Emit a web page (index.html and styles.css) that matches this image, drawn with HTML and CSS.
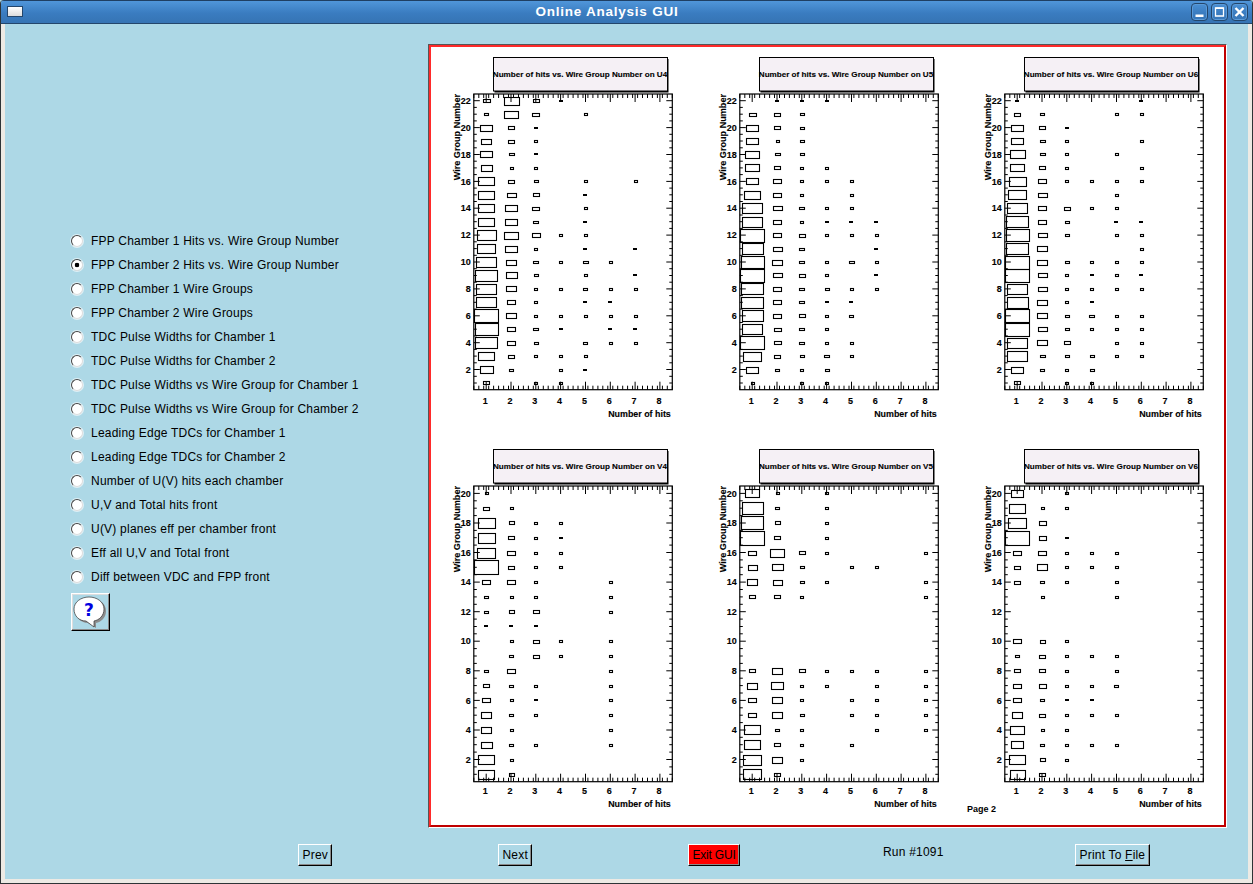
FILE: index.html
```html
<!DOCTYPE html>
<html lang="en">
<head>
    <meta charset="UTF-8">
    <title>Online Analysis GUI</title>
    <link rel="stylesheet" href="styles.css">
</head>
<body>
    <div class="window">
        <!-- Title bar -->
        <div class="titlebar">
            <span class="win-menu"></span>
            <span class="win-title">Online Analysis GUI</span>
            <span class="win-btn"><svg width="17" height="18" viewBox="0 0 17 18"><path d="M4.5 11.5h8v2.5h-8z" fill="#fff"/></svg></span>
            <span class="win-btn"><svg width="17" height="18" viewBox="0 0 17 18"><path d="M4.5 5h8v8h-8z" fill="none" stroke="#fff" stroke-width="1.3"/><path d="M4.5 5.2h8" stroke="#fff" stroke-width="1.6"/></svg></span>
            <span class="win-btn"><svg width="17" height="18" viewBox="0 0 17 18"><path d="M4.5 5l8 8M12.5 5l-8 8" stroke="#fff" stroke-width="2.4"/></svg></span>
        </div>

        <div class="client">
            <div class="main">
                <!-- Plot selection -->
                <div class="side">
                    <label class="opt"><input type="radio" name="plot"> FPP Chamber 1 Hits vs. Wire Group Number</label>
                    <label class="opt"><input type="radio" name="plot" checked> FPP Chamber 2 Hits vs. Wire Group Number</label>
                    <label class="opt"><input type="radio" name="plot"> FPP Chamber 1 Wire Groups</label>
                    <label class="opt"><input type="radio" name="plot"> FPP Chamber 2 Wire Groups</label>
                    <label class="opt"><input type="radio" name="plot"> TDC Pulse Widths for Chamber 1</label>
                    <label class="opt"><input type="radio" name="plot"> TDC Pulse Widths for Chamber 2</label>
                    <label class="opt"><input type="radio" name="plot"> TDC Pulse Widths vs Wire Group for Chamber 1</label>
                    <label class="opt"><input type="radio" name="plot"> TDC Pulse Widths vs Wire Group for Chamber 2</label>
                    <label class="opt"><input type="radio" name="plot"> Leading Edge TDCs for Chamber 1</label>
                    <label class="opt"><input type="radio" name="plot"> Leading Edge TDCs for Chamber 2</label>
                    <label class="opt"><input type="radio" name="plot"> Number of U(V) hits each chamber</label>
                    <label class="opt"><input type="radio" name="plot"> U,V and Total hits front</label>
                    <label class="opt"><input type="radio" name="plot"> U(V) planes eff per chamber front</label>
                    <label class="opt"><input type="radio" name="plot"> Eff all U,V and Total front</label>
                    <label class="opt"><input type="radio" name="plot"> Diff between VDC and FPP front</label>
                    <button class="help-btn" type="button">
                        <svg width="34" height="33" viewBox="0 0 34 33">
                            <path d="M17 2C25 2 33 7 33 15C33 22 28 26 23 27L23 32L15 27C8 27 3 22 3 15C3 7 9 2 17 2Z" fill="#8c8c8c"/>
                            <path d="M16 1C24 1 31 6 31 13C31 20 26 24 21 25L21 31L13 25C6 25 1 20 1 13C1 6 8 1 16 1Z" fill="#fff" stroke="#333" stroke-width="0.7"/>
                            <text class="help-mark" x="16" y="20">?</text>
                        </svg>
                    </button>
                </div>

                <!-- Canvas with the six plots -->
                <div class="canvas">
                    <div class="pad">
                        <div class="plots" id="plots"></div>
                        <span class="page-no">Page 2</span>
                    </div>
                </div>
            </div>

            <!-- Bottom buttons -->
            <div class="bar">
                <div><button class="btn" type="button">Prev</button></div>
                <div><button class="btn" type="button">Next</button></div>
                <div><button class="btn btn-exit" type="button">Exit GUI</button></div>
                <div class="run">Run #1091</div>
                <div><button class="btn" type="button">Print To <u>F</u>ile</button></div>
            </div>
        </div>
    </div>

    <script src="plots.js"></script>
</body>
</html>
```

FILE: styles.css
```css
/* General Styling */
body {
    margin: 0;
    background-color: #add8e6;
    font-family: "Liberation Sans", Arial, sans-serif;
    font-size: 12px;
    color: #000;
}
.window {
    width: 1253px;
    height: 884px;
    box-sizing: border-box;
    display: flex;
    flex-direction: column;
    border: 1px solid #2e3436;
    border-top: 0;
    border-radius: 4px 4px 0 0;
    overflow: hidden;
}

/* Title bar */
.titlebar {
    height: 24px;
    box-sizing: border-box;
    flex: none;
    display: flex;
    align-items: center;
    gap: 3px;
    padding: 0 4px 1px 6px;
    background: linear-gradient(#5096da, #3a7cc0 55%, #3674b4);
    border-top: 1px solid #1f3f63;
    border-bottom: 1px solid #24466b;
}
.win-menu {
    width: 14px;
    height: 9px;
    border: 1px solid #24466b;
    background: linear-gradient(#fff, #dcdcdc);
}
.win-title {
    flex: 1;
    text-align: center;
    color: #fff;
    font-size: 13.5px;
    font-weight: bold;
    letter-spacing: 0.75px;
}
.win-btn {
    width: 17px;
    height: 18px;
    box-sizing: border-box;
    display: flex;
    align-items: center;
    justify-content: center;
    border: 1px solid #24466b;
    border-radius: 4px;
    box-shadow: inset 0 0 0 1px #5a9ad8;
}
.win-btn svg {
    flex: none;
}

.client {
    flex: 1;
    min-height: 0;
    display: flex;
    flex-direction: column;
    background-color: #add8e6;
    border: 4px solid #edeae4;
    border-top: 0;
}
.main {
    height: 804px;
    flex: none;
    display: flex;
}

/* Radio list */
.side {
    width: 423px;
    flex: none;
    box-sizing: border-box;
    padding: 205px 0 0 66px;
}
.opt {
    height: 24px;
    display: flex;
    align-items: center;
    gap: 8px;
    letter-spacing: 0.22px;
}
.opt input {
    appearance: none;
    width: 12px;
    height: 12px;
    margin: 0;
    flex: none;
    border-radius: 50%;
    border: 1px solid;
    border-color: #444 #ddd #ddd #444;
    background: #fff;
    box-shadow: 0 0 0 1px rgba(255, 255, 255, 0.6);
}
.opt input:checked {
    background: radial-gradient(circle, #000 0 2px, #fff 2.6px);
}
.help-btn {
    display: block;
    width: 39px;
    height: 38px;
    margin-top: 4px;
    padding: 1px 0 0 1px;
    background-color: #add8e6;
    border: 1px solid;
    border-color: #fff #000 #000 #fff;
    box-shadow: inset -1px -1px 0 #8a8a8a, inset 1px 1px 0 #ddd;
}
.help-btn svg {
    display: block;
}
.help-mark {
    fill: #0000e0;
    font-family: "DejaVu Sans", sans-serif;
    font-size: 17px;
    font-weight: bold;
    text-anchor: middle;
}

/* Canvas */
.canvas {
    width: 799px;
    height: 784px;
    margin-top: 20px;
    box-sizing: border-box;
    border: 1px solid;
    border-color: #555 #fff #fff #555;
}
.pad {
    position: relative;
    height: 100%;
    box-sizing: border-box;
    background-color: #fff;
    border: 2px solid;
    border-color: #ff2a2a #c00000 #c00000 #ff2a2a;
}
.plots {
    display: grid;
    grid-template-columns: repeat(3, 265.5px);
    grid-auto-rows: 380px;
    row-gap: 12px;
}
.plots svg {
    display: block;
}
.page-no {
    position: absolute;
    left: 536px;
    top: 757px;
    font-size: 9px;
    font-weight: bold;
}

/* Plot parts */
.p-title-bg {
    fill: #f5f0f5;
    stroke: #000;
    stroke-width: 1;
}
.p-title, .p-label, .p-ylabel, .p-axis {
    font-family: "Liberation Sans", Arial, sans-serif;
    font-weight: bold;
    fill: #000;
    stroke: #000;
    stroke-width: 0.12;
}
.p-title {
    font-size: 8.1px;
    text-anchor: middle;
}
.p-label {
    font-size: 8.9px;
}
.p-ylabel {
    font-size: 9.1px;
}
.p-axis {
    font-size: 9px;
}
.p-frame {
    fill: none;
    stroke: #000;
    stroke-width: 1.2;
}
.p-ticks {
    fill: none;
    stroke: #000;
    stroke-width: 1;
}
.p-box {
    fill: none;
    stroke: #000;
    stroke-width: 1.1;
}

/* Bottom bar */
.bar {
    flex: 1;
    display: grid;
    grid-template-columns: 200px 190px 195px 192px auto;
    padding: 16px 0 0 293px;
}
.btn {
    height: 22px;
    padding: 0 3.5px;
    font-family: inherit;
    font-size: 12px;
    letter-spacing: 0.2px;
    background-color: #add8e6;
    border: 1px solid;
    border-color: #fff #000 #000 #fff;
    box-shadow: inset -1px -1px 0 #8a8a8a;
}
.btn-exit {
    background-color: #f00;
    letter-spacing: -0.2px;
}
.run {
    padding-top: 1px;
    letter-spacing: 0.2px;
}
```

FILE: plots.js
```js
// Box sizes for each plot: one row per wire group from the top down,
// one value per hit bin. The value is the box width in px, 1 is a filled dash.
const plots = [
    { name: 'U4', rows: [
        [8,16,7,1], [5,15,8,0,3], [13,7,1], [11,7,3], [13,6,1], [12,4,4],
        [17,7,5,0,3,0,3], [17,10,7,0,1], [17,13,8,0,3], [17,13,6,0,1],
        [20,15,9,3,3], [19,13,4,0,1,0,1], [21,11,6,3,6,3], [23,12,5,0,4,0,1],
        [21,11,3,3,5,3,3], [21,9,4,0,1,1], [25,11,4,4,4,3,3], [24,9,6,1,0,1,1],
        [23,9,5,0,5,3,3], [17,7,3,4,4], [14,5,0,4,1], [7,0,2,2]
    ] },
    { name: 'U5', rows: [
        [0,1,1,1], [8,7,5], [13,7,5], [13,4,5], [15,6,5], [15,7,4,3],
        [13,9,3,4,4], [17,9,4,0,4], [21,10,6,3,3], [21,9,4,1,1,1],
        [25,9,7,3,3,3], [22,10,6,0,0,1], [24,11,6,4,6,3], [25,10,7,4,0,1],
        [23,9,6,5,4,3], [23,9,6,1,1], [22,9,7,4,5], [21,8,6,4],
        [25,8,6,3,4], [19,7,5,6,3], [13,5,3,5], [2,0,2,2]
    ] },
    { name: 'U6', rows: [
        [1,0,0,0,0,1], [7,5,0,0,3,3], [13,7,1], [13,6,4,0,0,3], [16,6,4,0,3],
        [15,7,4,0,0,3], [18,9,4,4,4,3], [19,10,0,0,4], [21,9,7,3,3],
        [23,9,5,0,1,1], [24,10,5,0,3,3], [23,11,0,0,0,4], [25,11,5,3,4,4],
        [25,10,4,1,4,1], [21,10,4,4,4,4], [22,11,4,1], [25,11,5,6,3,3],
        [25,10,5,3,3,3], [21,11,7,0,4,3], [21,6,5,5,3,3], [13,5,3,5], [7,0,2,2]
    ] },
    { name: 'V4', rows: [
        [2], [7,3], [18,6,3,3], [18,7,4,1], [19,9,3,4], [25,7,4,4],
        [9,9,3,0,0,4], [5,4,4,0,0,4], [5,6,7,0,0,3], [1,1,1],
        [0,4,7,3,0,4], [0,5,7,3,0,4], [5,9,0,0,0,4], [7,5,4,0,0,4],
        [9,4,1,0,0,4], [11,5,3,0,0,3], [11,4,0,0,0,3], [12,5,3,0,0,3],
        [17,3], [17,6]
    ] },
    { name: 'V5', rows: [
        [15,4,0,4], [22,5,0,4], [23,6,0,4], [25,7,0,4], [9,15,7,4,0,0,0,4],
        [10,12,5,0,4,4], [11,10,5,4,0,0,0,4], [7,7,4,0,0,0,0,4], [], [], [], [],
        [7,11,7,4,4,4,0,4], [11,13,4,4,0,4,0,4], [9,11,4,0,4,4,0,4],
        [9,11,5,0,4,4,0,4], [17,5,4,0,0,4,0,4], [17,7,4,0,4], [19,11,4], [19,7]
    ] },
    { name: 'V6', rows: [
        [13,0,2], [17,4,4], [19,8], [25,8,1], [9,9,3,3,4], [7,11,4,3,3],
        [7,5,3,0,4], [0,4,0,0,4], [], [], [9,6,3], [5,7,3,3,3], [7,7,3,0,4],
        [9,8,4,3,5], [9,5,1,1], [11,7,3,3,3], [15,4,3], [13,5,3,4,3],
        [17,6,3], [16,7]
    ] }
];

const X0 = 42.8;
const FRAME_W = 198.5;
const TOP = 47;
const FRAME_H = 295.7;

function drawPlot(plot) {
    const nRows = plot.rows.length;
    const colW = FRAME_W / 8;
    const rowH = FRAME_H / nRows;
    const bottom = TOP + FRAME_H;
    const isU = plot.name[0] === 'U';
    let ticks = '';
    let texts = '';
    let boxes = '';

    // y axis: ticks on both sides every half bin, numbers on the even wire groups
    for (let v = 1; v <= nRows; v += 0.5) {
        const y = (bottom - (v - 0.5) * rowH).toFixed(1);
        const len = v % 2 === 0 ? 6 : 3;
        ticks += `M${X0} ${y}h${len}M${X0 + FRAME_W} ${y}h${-len}`;
        if (v % 2 === 0) {
            texts += `<text class="p-axis" x="${X0 - 3}" y="${+y + 3.2}" text-anchor="end">${v}</text>`;
        }
    }

    // x axis: major tick on every bin centre, small ones between
    for (let n = 0; n <= 40; n++) {
        const x = (X0 + n * colW / 5).toFixed(1);
        if ((n - 2.5) % 5 === 0) continue;
        ticks += `M${x} ${TOP}v4M${x} ${bottom}v-4`;
    }
    for (let c = 1; c <= 8; c++) {
        const x = (X0 + (c - 0.5) * colW).toFixed(1);
        ticks += `M${x} ${TOP}v8M${x} ${bottom}v-8`;
        texts += `<text class="p-axis" x="${+x - 1}" y="${bottom + (isU ? 14 : 12.5)}" text-anchor="middle">${c}</text>`;
    }

    // boxes, snapped to the pixel grid so small ones stay hollow
    plot.rows.forEach((row, r) => {
        const cy = TOP + (r + 0.5) * rowH;
        row.forEach((size, c) => {
            if (!size) return;
            const cx = X0 + (c + 0.5) * colW;
            if (size === 1) {
                boxes += `<rect x="${Math.round(cx - 2)}" y="${Math.round(cy - 1)}" width="4" height="2"/>`;
                return;
            }
            const w = Math.max(Math.round(size - 1), 3);
            const h = Math.max(Math.round(size * rowH / colW - 1), 2);
            const x = Math.round(cx - w / 2) + 0.5;
            const y = Math.round(cy - h / 2) + 0.5;
            boxes += `<rect class="p-box" x="${x}" y="${y}" width="${w}" height="${h}"/>`;
        });
    });

    const titleY = TOP - 36.5;
    return `<svg width="265" height="380" viewBox="0 0 265 380">
        <rect x="63.5" y="${titleY + 1.5}" width="174" height="33.5" fill="#000"/>
        <rect class="p-title-bg" x="62.5" y="${titleY}" width="174" height="33.5"/>
        <text class="p-title" x="149" y="${titleY + 19.5}">Number of hits vs. Wire Group Number on ${plot.name}</text>
        <path class="p-ticks" d="${ticks}"/>
        ${boxes}
        <rect class="p-frame" x="${X0}" y="${TOP}" width="${FRAME_W}" height="${FRAME_H}"/>
        ${texts}
        <text class="p-label" x="${X0 + 197}" y="${bottom + (isU ? 27.5 : 25.5)}" text-anchor="end">Number of hits</text>
        <text class="p-ylabel" transform="translate(${X0 - 14} ${TOP}) rotate(-90)" text-anchor="end">Wire Group Number</text>
    </svg>`;
}

document.getElementById('plots').innerHTML = plots.map(drawPlot).join('');
```
